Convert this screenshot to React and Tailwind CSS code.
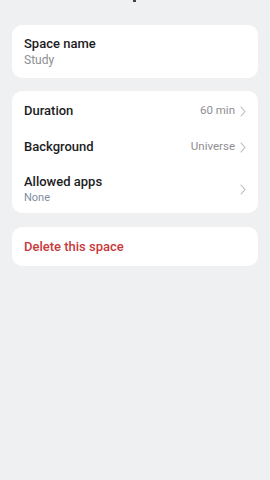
import React from "react";

function Chevron() {
  return (
    <svg width="6" height="11" viewBox="0 0 6 11" fill="none" className="ml-[5px]">
      <path d="M1 1l4 4.5-4 4.5" stroke="#b8b8bc" strokeWidth="1.1" strokeLinecap="round" strokeLinejoin="round" />
    </svg>
  );
}

export default function App() {
  return (
    <div className="w-[270px] h-[480px] bg-[#eff0f2] flex flex-col items-center px-3 pt-[25px]" style={{ fontFamily: "Roboto, 'Noto Sans', sans-serif" }}>
      <div className="absolute top-0 left-[133px] w-[3px] h-[2px] bg-[#444]" />
      <div className="w-full bg-white rounded-[10px] px-3 pt-[10px] pb-[10px]">
        <div className="text-[13px] leading-[17px] font-medium text-[#1c1c1e]">Space name</div>
        <div className="text-[12px] leading-[16px] text-[#8e8e93]">Study</div>
      </div>
      <div className="w-full bg-white rounded-[10px] mt-[13px] px-3 pt-[2px]">
        <div className="flex items-center h-[36px]">
          <div className="text-[13px] font-medium text-[#1c1c1e] flex-1">Duration</div>
          <div className="text-[11.5px] text-[#8e8e93]">60 min</div>
          <Chevron />
        </div>
        <div className="flex items-center h-[36px]">
          <div className="text-[13px] font-medium text-[#1c1c1e] flex-1">Background</div>
          <div className="text-[11.5px] text-[#8e8e93]">Universe</div>
          <Chevron />
        </div>
        <div className="flex items-center h-[48px]">
          <div className="flex-1">
            <div className="text-[13px] leading-[17px] font-medium text-[#1c1c1e]">Allowed apps</div>
            <div className="text-[11px] leading-[15px] text-[#7d8ea0]">None</div>
          </div>
          <Chevron />
        </div>
      </div>
      <div className="w-full bg-white rounded-[10px] mt-[14px] px-3 h-[39px] flex items-center">
        <div className="text-[13px] font-medium text-[#c8393b]">Delete this space</div>
      </div>
    </div>
  );
}
